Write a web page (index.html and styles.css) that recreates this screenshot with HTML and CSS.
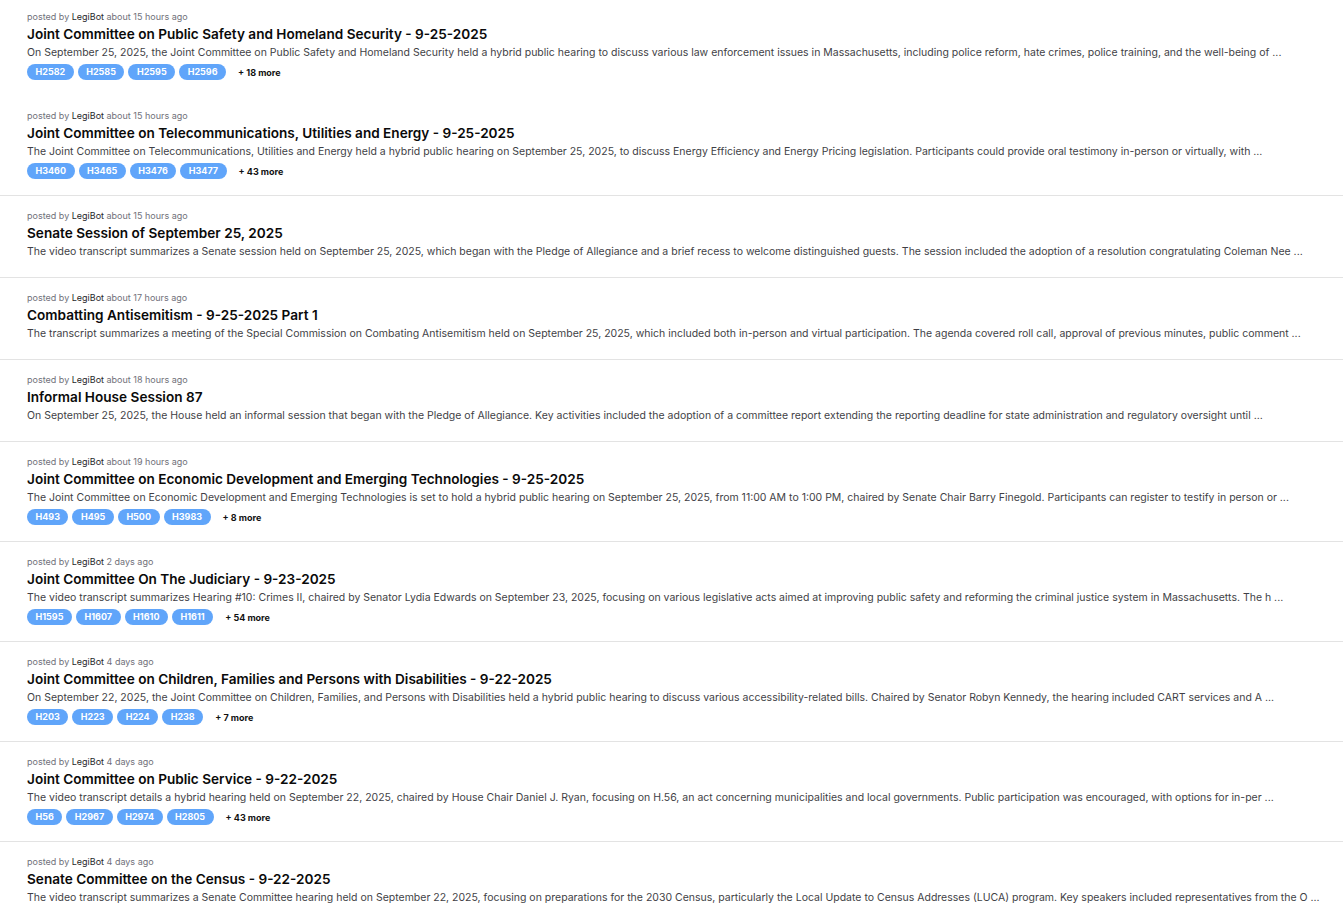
FILE: index.html
```html
<!DOCTYPE html>
<html>
<head>
    <title>Recent Hearings</title>
    <link rel="stylesheet" href="styles.css">
</head>
<body>
    <div class="post-list">
        <div class="post">
            <div class="meta">posted by <span class="author">LegiBot</span> about 15 hours ago</div>
            <h2 class="title">Joint Committee on Public Safety and Homeland Security - 9-25-2025</h2>
            <p class="summary">On September 25, 2025, the Joint Committee on Public Safety and Homeland Security held a hybrid public hearing to discuss various law enforcement issues in Massachusetts, including police reform, hate crimes, police training, and the well-being of ...</p>
            <div class="tags">
                <span class="tag">H2582</span><span class="tag">H2585</span><span class="tag">H2595</span><span class="tag">H2596</span>
                <span class="more">+ 18 more</span>
            </div>
        </div>

        <div class="post">
            <div class="meta">posted by <span class="author">LegiBot</span> about 15 hours ago</div>
            <h2 class="title">Joint Committee on Telecommunications, Utilities and Energy - 9-25-2025</h2>
            <p class="summary">The Joint Committee on Telecommunications, Utilities and Energy held a hybrid public hearing on September 25, 2025, to discuss Energy Efficiency and Energy Pricing legislation. Participants could provide oral testimony in-person or virtually, with ...</p>
            <div class="tags">
                <span class="tag">H3460</span><span class="tag">H3465</span><span class="tag">H3476</span><span class="tag">H3477</span>
                <span class="more">+ 43 more</span>
            </div>
        </div>

        <div class="post">
            <div class="meta">posted by <span class="author">LegiBot</span> about 15 hours ago</div>
            <h2 class="title">Senate Session of September 25, 2025</h2>
            <p class="summary">The video transcript summarizes a Senate session held on September 25, 2025, which began with the Pledge of Allegiance and a brief recess to welcome distinguished guests. The session included the adoption of a resolution congratulating Coleman Nee ...</p>
        </div>

        <div class="post">
            <div class="meta">posted by <span class="author">LegiBot</span> about 17 hours ago</div>
            <h2 class="title">Combatting Antisemitism - 9-25-2025 Part 1</h2>
            <p class="summary">The transcript summarizes a meeting of the Special Commission on Combating Antisemitism held on September 25, 2025, which included both in-person and virtual participation. The agenda covered roll call, approval of previous minutes, public comment ...</p>
        </div>

        <div class="post">
            <div class="meta">posted by <span class="author">LegiBot</span> about 18 hours ago</div>
            <h2 class="title">Informal House Session 87</h2>
            <p class="summary">On September 25, 2025, the House held an informal session that began with the Pledge of Allegiance. Key activities included the adoption of a committee report extending the reporting deadline for state administration and regulatory oversight until ...</p>
        </div>

        <div class="post">
            <div class="meta">posted by <span class="author">LegiBot</span> about 19 hours ago</div>
            <h2 class="title">Joint Committee on Economic Development and Emerging Technologies - 9-25-2025</h2>
            <p class="summary">The Joint Committee on Economic Development and Emerging Technologies is set to hold a hybrid public hearing on September 25, 2025, from 11:00 AM to 1:00 PM, chaired by Senate Chair Barry Finegold. Participants can register to testify in person or ...</p>
            <div class="tags">
                <span class="tag">H493</span><span class="tag">H495</span><span class="tag">H500</span><span class="tag">H3983</span>
                <span class="more">+ 8 more</span>
            </div>
        </div>

        <div class="post">
            <div class="meta">posted by <span class="author">LegiBot</span> 2 days ago</div>
            <h2 class="title">Joint Committee On The Judiciary - 9-23-2025</h2>
            <p class="summary">The video transcript summarizes Hearing #10: Crimes II, chaired by Senator Lydia Edwards on September 23, 2025, focusing on various legislative acts aimed at improving public safety and reforming the criminal justice system in Massachusetts. The h ...</p>
            <div class="tags">
                <span class="tag">H1595</span><span class="tag">H1607</span><span class="tag">H1610</span><span class="tag">H1611</span>
                <span class="more">+ 54 more</span>
            </div>
        </div>

        <div class="post">
            <div class="meta">posted by <span class="author">LegiBot</span> 4 days ago</div>
            <h2 class="title">Joint Committee on Children, Families and Persons with Disabilities - 9-22-2025</h2>
            <p class="summary">On September 22, 2025, the Joint Committee on Children, Families, and Persons with Disabilities held a hybrid public hearing to discuss various accessibility-related bills. Chaired by Senator Robyn Kennedy, the hearing included CART services and A ...</p>
            <div class="tags">
                <span class="tag">H203</span><span class="tag">H223</span><span class="tag">H224</span><span class="tag">H238</span>
                <span class="more">+ 7 more</span>
            </div>
        </div>

        <div class="post">
            <div class="meta">posted by <span class="author">LegiBot</span> 4 days ago</div>
            <h2 class="title">Joint Committee on Public Service - 9-22-2025</h2>
            <p class="summary">The video transcript details a hybrid hearing held on September 22, 2025, chaired by House Chair Daniel J. Ryan, focusing on H.56, an act concerning municipalities and local governments. Public participation was encouraged, with options for in-per ...</p>
            <div class="tags">
                <span class="tag">H56</span><span class="tag">H2967</span><span class="tag">H2974</span><span class="tag">H2805</span>
                <span class="more">+ 43 more</span>
            </div>
        </div>

        <div class="post">
            <div class="meta">posted by <span class="author">LegiBot</span> 4 days ago</div>
            <h2 class="title">Senate Committee on the Census - 9-22-2025</h2>
            <p class="summary">The video transcript summarizes a Senate Committee hearing held on September 22, 2025, focusing on preparations for the 2030 Census, particularly the Local Update to Census Addresses (LUCA) program. Key speakers included representatives from the O ...</p>
        </div>
    </div>
</body>
</html>
```

FILE: styles.css
```css
body {
    margin: 0;
    background-color: #ffffff;
    color: #111111;
    font-family: Inter, "Noto Sans", Arial, sans-serif;
    overflow: hidden;
}

.post-list {
    display: flex;
    flex-direction: column;
}

.post {
    padding: 12px 27px 16px;
    border-top: 1px solid #e3e3e3;
}

.post:first-child {
    padding-top: 9px;
    border-top: none;
}

.post:nth-child(2) {
    padding-top: 11px;
    border-top-color: transparent;
}

.meta {
    font-size: 9px;
    line-height: 16px;
    color: #71717a;
}

.author {
    color: #27272a;
}

.title {
    font-size: 13.6px;
    font-weight: 600;
    line-height: 18px;
    margin: 0;
    color: #0a0a0a;
}

.summary {
    font-size: 10.5px;
    line-height: 19px;
    margin: 0;
    color: #3f3f46;
    white-space: nowrap;
}

.tags {
    display: flex;
    align-items: center;
    gap: 4px;
    margin-top: 2px;
}

.tag {
    background-color: #60a5fa;
    color: #ffffff;
    font-size: 9px;
    font-weight: 700;
    height: 16px;
    line-height: 16px;
    padding: 0 8.5px;
    border-radius: 8px;
}

.more {
    font-size: 9px;
    font-weight: 700;
    color: #111111;
    margin-left: 8px;
}
```
